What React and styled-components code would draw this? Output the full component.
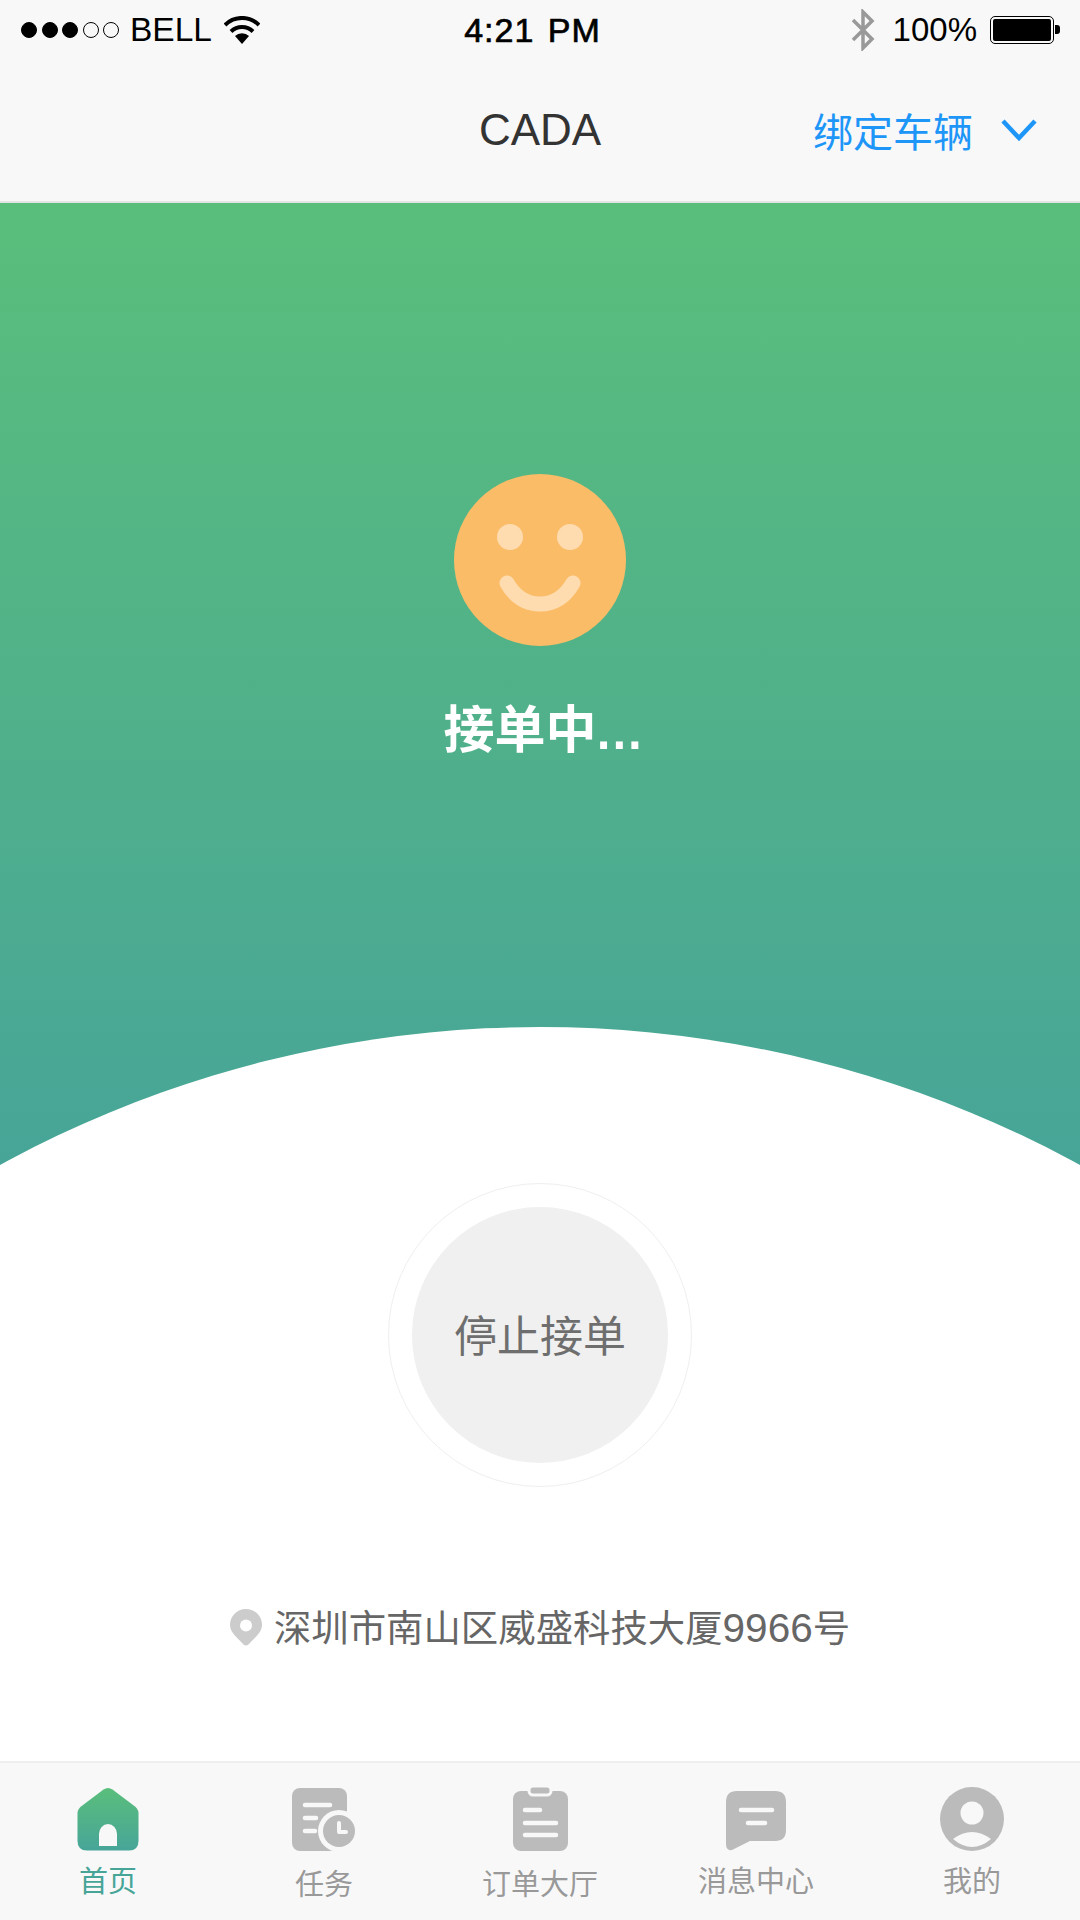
import React from 'react';
import styled, { createGlobalStyle } from 'styled-components';

const CJK = `"Liberation Sans", "Noto Sans CJK SC", sans-serif`;

const Global = createGlobalStyle`
    html, body { margin: 0; padding: 0; background: #fff; }
    * { box-sizing: border-box; }
`;

const Page = styled.div`
    width: 1080px;
    height: 1920px;
    display: flex;
    flex-direction: column;
    overflow: hidden;
    font-family: ${CJK};
    background: #fff;
`;

const StatusBar = styled.div`
    height: 60px;
    flex: none;
    display: grid;
    grid-template-columns: 1fr auto 1fr;
    align-items: center;
    padding: 0 20px 0 21px;
    background: #f8f8f8;
    color: #000;
    font-size: 33px;
`;

const StatusLeft = styled.div`
    display: flex;
    align-items: center;
`;

const StatusRight = styled.div`
    display: flex;
    align-items: center;
    justify-content: flex-end;
`;

const Dots = styled.div`
    display: flex;
    gap: 4.5px;
    margin-right: 11px;
`;

const Dot = styled.span`
    width: 16px;
    height: 16px;
    border-radius: 50%;
    border: 1px solid #000;
    background: ${(p) => (p.$on ? '#000' : 'transparent')};
`;

const Carrier = styled.span`
    font-size: 33.5px;
`;

const Wifi = styled.svg`
    width: 36px;
    height: 28px;
    margin-left: 12px;
`;

const Clock = styled.div`
    font-size: 34px;
    -webkit-text-stroke: 0.7px #000;
    letter-spacing: 1px;
    word-spacing: 3px;
    margin-left: -16px;
`;

const Bluetooth = styled.svg`
    width: 24px;
    height: 42px;
    margin-right: 18px;
`;

const Battery = styled.div`
    width: 64px;
    height: 28px;
    margin-left: 13px;
    margin-right: 6px;
    padding: 2px;
    border: 1.5px solid #000;
    border-radius: 5px;
    position: relative;
    &::after {
        content: '';
        position: absolute;
        right: -7px;
        top: 8px;
        width: 5px;
        height: 9px;
        background: #000;
        border-radius: 0 3px 3px 0;
    }
`;

const BatteryFill = styled.div`
    height: 100%;
    background: #000;
    border-radius: 2px;
`;

const NavBar = styled.div`
    height: 143px;
    flex: none;
    display: grid;
    grid-template-columns: 1fr auto 1fr;
    align-items: center;
    background: #f8f8f8;
    border-bottom: 2px solid #e4e4e4;
    padding-bottom: 1px;
`;

const Title = styled.div`
    grid-column: 2;
    font-size: 44px;
    color: #333;
`;

const Bind = styled.div`
    grid-column: 3;
    display: flex;
    align-items: center;
    justify-content: flex-end;
    padding-right: 43px;
    font-size: 40px;
    color: #1e96f8;
    gap: 28px;
`;

const Hero = styled.section`
    height: 962px;
    flex: none;
    position: relative;
    overflow: hidden;
    display: flex;
    flex-direction: column;
    align-items: center;
    padding-top: 270px;
    background: linear-gradient(#5abe7b, #47a598);
`;

const Arc = styled.div`
    position: absolute;
    left: 50%;
    top: 824px;
    width: 2252px;
    height: 2252px;
    margin-left: -1126px;
    border-radius: 50%;
    background: #fff;
`;

const Smile = styled.svg`
    width: 174px;
    height: 174px;
`;

const Waiting = styled.div`
    margin-top: 49px;
    padding-left: 7px;
    font-size: 51px;
    line-height: 70px;
    font-weight: 700;
    color: #fff;
`;

const Ellipsis = styled.span`
    font-weight: 400;
    letter-spacing: 1.5px;
    -webkit-text-stroke: 2px #fff;
`;

const Main = styled.main`
    flex: 1;
    display: flex;
    flex-direction: column;
    align-items: center;
    padding-top: 18px;
`;

const StopRing = styled.div`
    width: 304px;
    height: 304px;
    border-radius: 50%;
    border: 1px solid #efefef;
    display: flex;
    align-items: center;
    justify-content: center;
`;

const StopButton = styled.div`
    width: 256px;
    height: 256px;
    border-radius: 50%;
    background: #f0f0f0;
    display: flex;
    align-items: center;
    justify-content: center;
    padding-bottom: 5px;
    font-size: 43px;
    color: #6e6e6e;
`;

const Address = styled.div`
    margin-top: 116px;
    display: flex;
    align-items: center;
    gap: 12px;
    font-size: 37.4px;
    line-height: 50px;
    color: #666;
`;

const Digits = styled.span`
    font-size: 40.500px;
`;

const Pin = styled.svg`
    width: 32px;
    height: 37px;
    margin-bottom: 3px;
`;

const TabBar = styled.nav`
    height: 159px;
    flex: none;
    display: grid;
    grid-template-columns: repeat(5, 1fr);
    padding-top: 23px;
    background: #f8f8f8;
    border-top: 2px solid #eeeeee;
`;

const Tab = styled.div`
    display: flex;
    flex-direction: column;
    align-items: center;
    font-size: 29px;
    line-height: 32px;
    color: ${(p) => (p.$active ? '#47a598' : '#999')};
`;

const TabIcon = styled.svg`
    width: 72px;
    height: 66px;
`;

const TabLabel = styled.span`
    margin-top: ${(p) => (p.$low ? '17px' : '14px')};
`;

function HomeIcon() {
    return (
        <TabIcon viewBox="0 0 72 66">
            <defs>
                <linearGradient id="homeFill" x1="0" y1="0" x2="0" y2="1">
                    <stop offset="0" stopColor="#5abe7b" />
                    <stop offset="1" stopColor="#47a598" />
                </linearGradient>
            </defs>
            <path
                d="M31.500 3.500 Q36 0.500 40.500 3.500 L63 20.500 Q66.500 23.500 66.500 27 L66.500 55 Q66.500 64.500 57 64.500 L15 64.500 Q5.500 64.500 5.500 55 L5.500 27 Q5.500 23.500 9 20.500 Z"
                fill="url(#homeFill)"
            />
            <path d="M27 60 L27 48 A9 10 0 0 1 45 48 L45 60 Z" fill="#f8f8f8" />
        </TabIcon>
    );
}

function TaskIcon() {
    return (
        <TabIcon viewBox="0 0 72 66">
            <rect x="4" y="2" width="55" height="63" rx="8" fill="#bbb" />
            <g stroke="#f8f8f8" strokeWidth="4.500" strokeLinecap="round">
                <line x1="17" y1="19" x2="42" y2="19" />
                <line x1="17" y1="32" x2="28" y2="32" />
                <line x1="17" y1="45" x2="27" y2="45" />
            </g>
            <circle cx="51" cy="45" r="21" fill="#f8f8f8" />
            <circle cx="51" cy="45" r="16" fill="#bbb" />
            <path d="M51 37 L51 46 L58 46" fill="none" stroke="#f8f8f8" strokeWidth="4" strokeLinecap="round" strokeLinejoin="round" />
        </TabIcon>
    );
}

function OrderIcon() {
    return (
        <TabIcon viewBox="0 0 72 66">
            <rect x="9" y="5" width="55" height="60" rx="8" fill="#bbb" />
            <rect x="25" y="0" width="22" height="9" rx="4" fill="#bbb" stroke="#f8f8f8" strokeWidth="3" />
            <g stroke="#f8f8f8" strokeWidth="4.500" strokeLinecap="round">
                <line x1="21" y1="24" x2="36" y2="24" />
                <line x1="21" y1="37" x2="52" y2="37" />
                <line x1="21" y1="49" x2="52" y2="49" />
            </g>
        </TabIcon>
    );
}

function MessageIcon() {
    return (
        <TabIcon viewBox="0 0 72 66">
            <path
                d="M17 5 L55 5 Q66 5 66 16 L66 44 Q66 55 55 55 L30 55 L12 64 Q6 65 6 58 L6 16 Q6 5 17 5 Z"
                fill="#bbb"
            />
            <g stroke="#f8f8f8" strokeWidth="4.500" strokeLinecap="round">
                <line x1="21" y1="24" x2="52" y2="24" />
                <line x1="28" y1="37" x2="45" y2="37" />
            </g>
        </TabIcon>
    );
}

function UserIcon() {
    return (
        <TabIcon viewBox="0 0 72 66">
            <circle cx="36" cy="33" r="32" fill="#bbb" />
            <circle cx="36" cy="27" r="11.500" fill="#f8f8f8" />
            <path d="M17 53 Q36 39 55 53 Q36 69 17 53 Z" fill="#f8f8f8" />
        </TabIcon>
    );
}

function App() {
    return (
        <Page>
            <Global />
            <StatusBar>
                <StatusLeft>
                    <Dots>
                        <Dot $on />
                        <Dot $on />
                        <Dot $on />
                        <Dot />
                        <Dot />
                    </Dots>
                    <Carrier>BELL</Carrier>
                    <Wifi viewBox="0 0 36 28">
                        <path d="M1 9 A24 24 0 0 1 35 9" fill="none" stroke="#000" strokeWidth="4" />
                        <path d="M7 15.500 A16 16 0 0 1 29 15.500" fill="none" stroke="#000" strokeWidth="4" />
                        <path d="M11 20 A10 10 0 0 1 25 20 L18 28 Z" fill="#000" />
                    </Wifi>
                </StatusLeft>
                <Clock>4:21 PM</Clock>
                <StatusRight>
                    <Bluetooth viewBox="0 0 24 42">
                        <path d="M2 11 L21 30 L12 39 L12 3 L21 12 L2 31" fill="none" stroke="#999" strokeWidth="3.500" />
                    </Bluetooth>
                    100%
                    <Battery>
                        <BatteryFill />
                    </Battery>
                </StatusRight>
            </StatusBar>
            <NavBar>
                <Title>CADA</Title>
                <Bind>
                    绑定车辆
                    <svg width="36" height="24" viewBox="0 0 36 24">
                        <path d="M2 3 L18 20 L34 3" fill="none" stroke="#1e96f8" strokeWidth="4.500" />
                    </svg>
                </Bind>
            </NavBar>
            <Hero>
                <Smile viewBox="0 0 174 174">
                    <circle cx="87" cy="87" r="86" fill="#fbbc68" />
                    <circle cx="57" cy="64" r="13" fill="#fedcb0" />
                    <circle cx="117" cy="64" r="13" fill="#fedcb0" />
                    <path d="M54 110 Q66 131 87 131 Q108 131 120 110" fill="none" stroke="#fedcb0" strokeWidth="15" strokeLinecap="round" />
                </Smile>
                <Waiting>
                    接单中<Ellipsis>...</Ellipsis>
                </Waiting>
                <Arc />
            </Hero>
            <Main>
                <StopRing>
                    <StopButton>停止接单</StopButton>
                </StopRing>
                <Address>
                    <Pin viewBox="0 0 32 37">
                        <path
                            d="M16 0 C25 0 32 7 32 16 C32 24 23 30 18.500 35.500 Q16 37.500 13.500 35.500 C9 30 0 24 0 16 C0 7 7 0 16 0 Z"
                            fill="#ccc"
                        />
                        <circle cx="16" cy="16.500" r="6" fill="#fff" />
                    </Pin>
                    <span>
                        深圳市南山区威盛科技大厦<Digits>9966</Digits>号
                    </span>
                </Address>
            </Main>
            <TabBar>
                <Tab $active>
                    <HomeIcon />
                    <TabLabel>首页</TabLabel>
                </Tab>
                <Tab>
                    <TaskIcon />
                    <TabLabel $low>任务</TabLabel>
                </Tab>
                <Tab>
                    <OrderIcon />
                    <TabLabel $low>订单大厅</TabLabel>
                </Tab>
                <Tab>
                    <MessageIcon />
                    <TabLabel>消息中心</TabLabel>
                </Tab>
                <Tab>
                    <UserIcon />
                    <TabLabel>我的</TabLabel>
                </Tab>
            </TabBar>
        </Page>
    );
}

export default App;
